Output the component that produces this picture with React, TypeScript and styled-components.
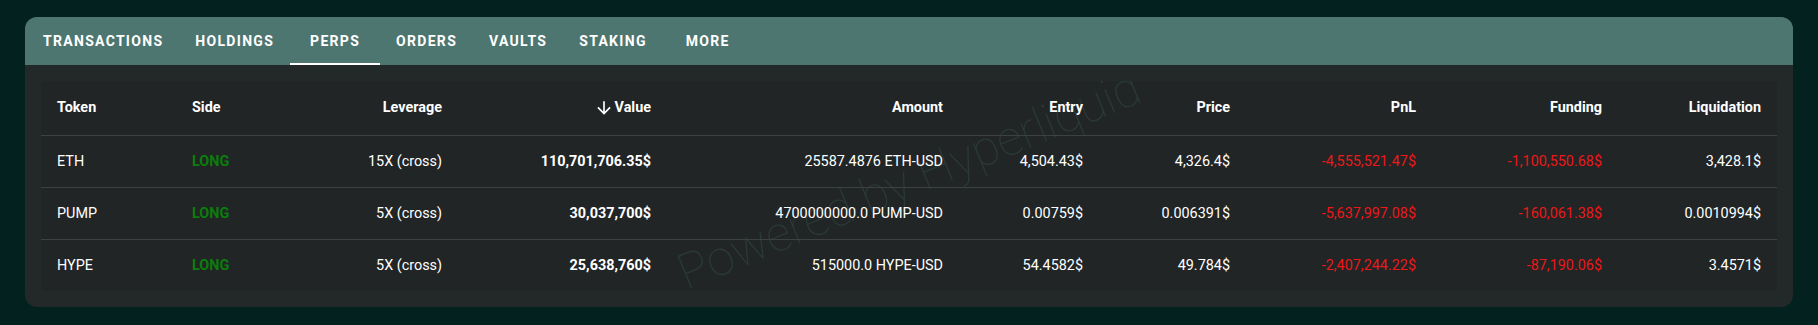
import React from "react";
import styled, { createGlobalStyle } from "styled-components";

const GlobalStyle = createGlobalStyle`
  html, body { margin: 0; padding: 0; background: #03211e; }
  body { font-family: Roboto, "Noto Sans", "Liberation Sans", sans-serif; }
  * { box-sizing: border-box; }
`;

const Page = styled.div`
  padding: 17px 25px 16px 25px;
  width: 1818px;
`;

const Card = styled.section`
  background: #232928;
  border-radius: 12px;
  overflow: hidden;
`;

const TabBar = styled.nav`
  display: flex;
  height: 48px;
  background: #4e7671;
  padding-left: 2px;
`;

const Tab = styled.div<{ $active?: boolean }>`
  position: relative;
  display: flex;
  align-items: center;
  justify-content: center;
  min-width: 90px;
  padding: 0 16px;
  color: #ffffff;
  font-size: 14px;
  font-weight: 700;
  letter-spacing: 1.3px;
  text-transform: uppercase;
  cursor: pointer;
  &::after {
    content: "";
    position: absolute;
    left: 0;
    right: 0;
    bottom: 0;
    height: 2px;
    background: ${(p) => (p.$active ? "#ffffff" : "transparent")};
  }
`;

const Body = styled.div`
  padding: 16px;
`;

const TableWrap = styled.div`
  position: relative;
  background: #212526;
  border-radius: 4px;
  overflow: hidden;
`;

const Watermark = styled.div`
  position: absolute;
  left: 50%;
  top: 50%;
  transform: translate(-50%, -62%) rotate(-22.5deg);
  font-size: 49px;
  font-weight: 100;
  line-height: 1;
  color: #2b3a37;
  white-space: nowrap;
  pointer-events: none;
  user-select: none;
`;

const Table = styled.table`
  position: relative;
  width: 100%;
  border-collapse: separate;
  border-spacing: 0;
  table-layout: fixed;
`;

const HeadCell = styled.th<{ $align?: "left" | "right" }>`
  padding: 16px;
  line-height: 22px;
  font-size: 14.4px;
  font-weight: 700;
  color: #ffffff;
  text-align: ${(p) => p.$align ?? "right"};
  border-bottom: 1px solid #3c4141;
  white-space: nowrap;
`;

const SortLabel = styled.span`
  display: inline-flex;
  align-items: center;
  vertical-align: top;
  svg { margin-right: 1px; }
`;

type Tone = "plain" | "bold" | "long" | "neg";

const toneColor: Record<Tone, string> = {
  plain: "#ffffff",
  bold: "#ffffff",
  long: "#0b7d0b",
  neg: "#ec1818",
};

const Cell = styled.td<{ $align?: "left" | "right"; $tone?: Tone; $last?: boolean }>`
  padding: 16px;
  line-height: 19px;
  font-size: 14.4px;
  font-weight: ${(p) => (p.$tone === "bold" || p.$tone === "long" ? 700 : 400)};
  color: ${(p) => toneColor[p.$tone ?? "plain"]};
  text-align: ${(p) => p.$align ?? "right"};
  border-bottom: ${(p) => (p.$last ? "0" : "1px solid #3c4141")};
  white-space: nowrap;
`;

const tabs = ["Transactions", "Holdings", "Perps", "Orders", "Vaults", "Staking", "More"];

const colWidths = [135, 130, 152, 209, 292, 140, 147, 186, 186, 159];

const headers = ["Token", "Side", "Leverage", "Value", "Amount", "Entry", "Price", "PnL", "Funding", "Liquidation"];

const rows = [
  ["ETH", "LONG", "15X (cross)", "110,701,706.35$", "25587.4876 ETH-USD", "4,504.43$", "4,326.4$", "-4,555,521.47$", "-1,100,550.68$", "3,428.1$"],
  ["PUMP", "LONG", "5X (cross)", "30,037,700$", "4700000000.0 PUMP-USD", "0.00759$", "0.006391$", "-5,637,997.08$", "-160,061.38$", "0.0010994$"],
  ["HYPE", "LONG", "5X (cross)", "25,638,760$", "515000.0 HYPE-USD", "54.4582$", "49.784$", "-2,407,244.22$", "-87,190.06$", "3.4571$"],
];

const ArrowDown = () => (
  <svg width="20" height="20" viewBox="0 0 24 24" fill="#ffffff" aria-hidden="true">
    <path d="M20 12l-1.41-1.41L13 16.17V4h-2v12.17l-5.58-5.59L4 12l8 8 8-8z" />
  </svg>
);

const toneFor = (ci: number, v: string): Tone => {
  if (ci === 1) return "long";
  if (ci === 3) return "bold";
  if ((ci === 7 || ci === 8) && v.startsWith("-")) return "neg";
  return "plain";
};

export default function App() {
  return (
    <>
      <GlobalStyle />
      <Page>
        <Card>
          <TabBar>
            {tabs.map((t) => (
              <Tab key={t} $active={t === "Perps"}>
                {t}
              </Tab>
            ))}
          </TabBar>
          <Body>
            <TableWrap>
              <Watermark>Powered by Hyperliquid</Watermark>
              <Table>
                <colgroup>
                  {colWidths.map((w, i) => (
                    <col key={i} style={{ width: w }} />
                  ))}
                </colgroup>
                <thead>
                  <tr>
                    {headers.map((h, i) => (
                      <HeadCell key={h} $align={i < 2 ? "left" : "right"}>
                        {h === "Value" ? (
                          <SortLabel>
                            <ArrowDown />
                            {h}
                          </SortLabel>
                        ) : (
                          h
                        )}
                      </HeadCell>
                    ))}
                  </tr>
                </thead>
                <tbody>
                  {rows.map((r, ri) => (
                    <tr key={ri}>
                      {r.map((v, ci) => (
                        <Cell
                          key={ci}
                          $align={ci < 2 ? "left" : "right"}
                          $tone={toneFor(ci, v)}
                          $last={ri === rows.length - 1}
                        >
                          {v}
                        </Cell>
                      ))}
                    </tr>
                  ))}
                </tbody>
              </Table>
            </TableWrap>
          </Body>
        </Card>
      </Page>
    </>
  );
}
